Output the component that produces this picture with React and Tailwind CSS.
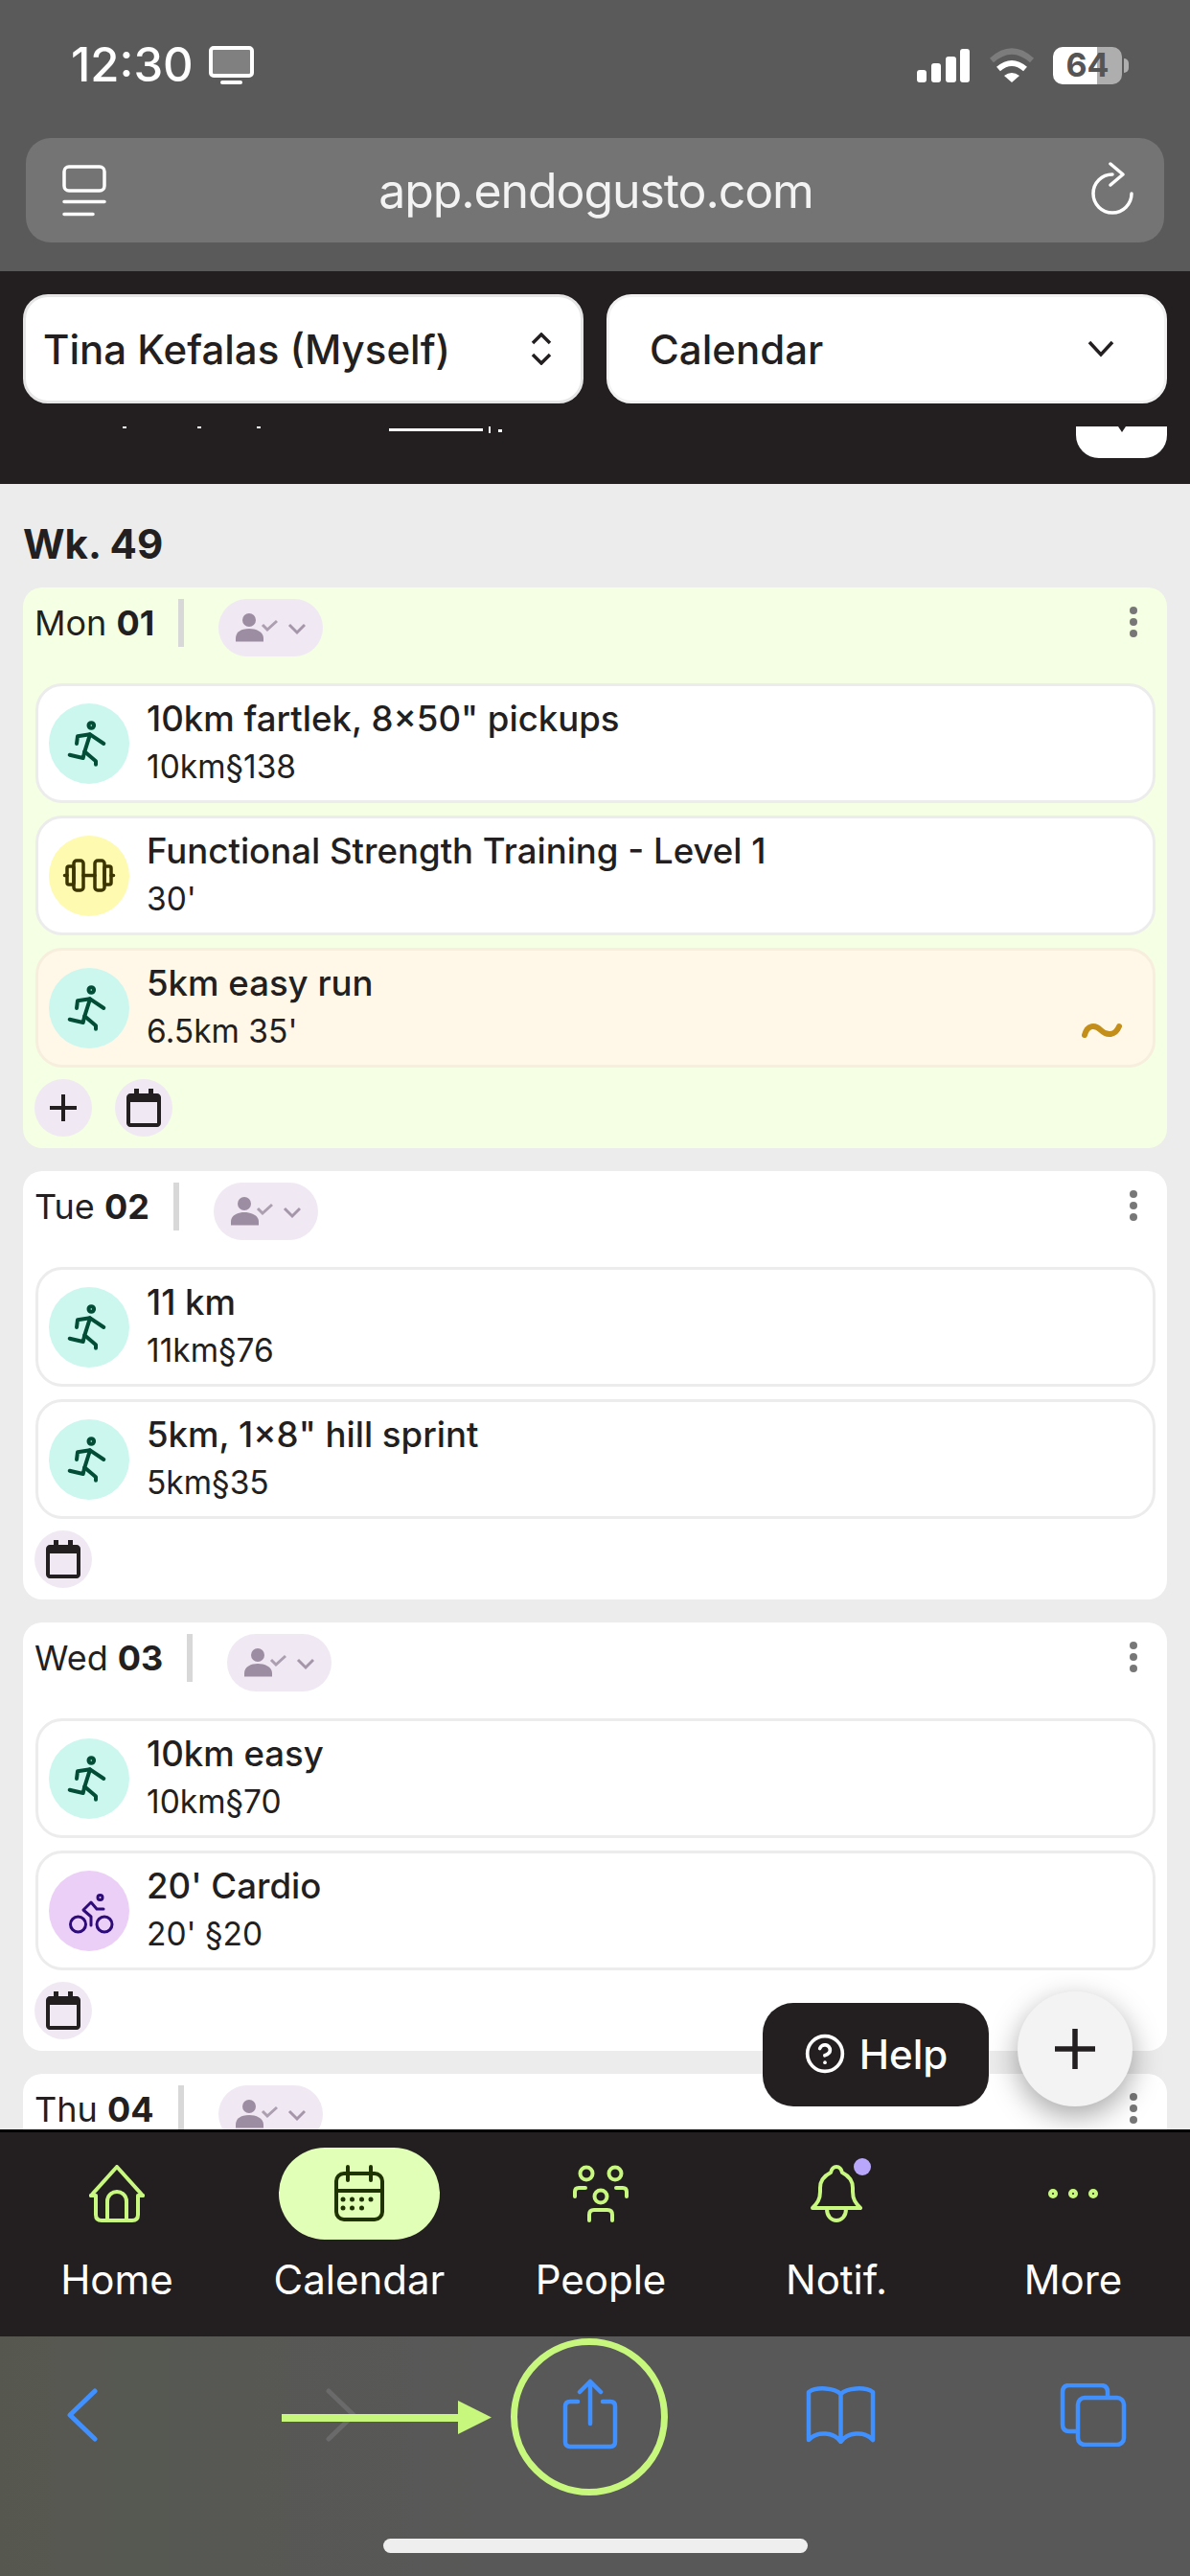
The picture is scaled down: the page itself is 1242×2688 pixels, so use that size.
import { CircleHelp } from "lucide-react";

const RUN = "run";
const LIFT = "lift";
const BIKE = "bike";

const days = [
  {
    name: "Mon",
    num: "01",
    today: true,
    canAdd: true,
    items: [
      { type: RUN, title: '10km fartlek, 8×50" pickups', sub: "10km§138" },
      { type: LIFT, title: "Functional Strength Training - Level 1", sub: "30'" },
      { type: RUN, title: "5km easy run", sub: "6.5km 35'", partial: true },
    ],
  },
  {
    name: "Tue",
    num: "02",
    items: [
      { type: RUN, title: "11 km", sub: "11km§76" },
      { type: RUN, title: '5km, 1×8" hill sprint', sub: "5km§35" },
    ],
  },
  {
    name: "Wed",
    num: "03",
    items: [
      { type: RUN, title: "10km easy", sub: "10km§70" },
      { type: BIKE, title: "20' Cardio", sub: "20' §20" },
    ],
  },
  { name: "Thu", num: "04", items: [] },
];

function SportIcon({ type }) {
  if (type === LIFT) {
    return (
      <div className="flex h-[84px] w-[84px] shrink-0 items-center justify-center rounded-full bg-[#fefaaf]">
        <svg viewBox="0 0 84 84" className="h-[84px] w-[84px]" fill="none" stroke="#3d3500" strokeWidth="3.5" strokeLinecap="round" strokeLinejoin="round">
          <rect x="19" y="32" width="7" height="19" rx="2" />
          <rect x="26" y="26" width="10" height="31" rx="3" />
          <rect x="48" y="26" width="10" height="31" rx="3" />
          <rect x="58" y="32" width="7" height="19" rx="2" />
          <path d="M36 41.5H48M16.5 41.5H19M65 41.5H67.5" />
        </svg>
      </div>
    );
  }
  if (type === BIKE) {
    return (
      <div className="flex h-[84px] w-[84px] shrink-0 items-center justify-center rounded-full bg-[#eccff7]">
        <svg viewBox="0 0 84 84" className="h-[84px] w-[84px]" fill="none" stroke="#2d0c7a" strokeWidth="3" strokeLinecap="round" strokeLinejoin="round">
          <circle cx="30.5" cy="56" r="8" />
          <circle cx="58" cy="56" r="8" />
          <circle cx="53.5" cy="28" r="2.5" />
          <path d="M44 57V48L36 41L44 33L50 40H57" />
        </svg>
      </div>
    );
  }
  return (
    <div className="flex h-[84px] w-[84px] shrink-0 items-center justify-center rounded-full bg-[#ccf7ee]">
      <svg viewBox="0 0 84 84" className="h-[84px] w-[84px]" fill="none" stroke="#024d35" strokeWidth="4" strokeLinecap="round" strokeLinejoin="round">
        <circle cx="44.3" cy="23" r="2.8" />
        <path d="M29 42L30 34.3L43 32.3L57.3 42" />
        <path d="M43 32.3L37.3 50.3L49 60.3V63.7" />
        <path d="M37.3 50.3L35.7 57L21.7 53.7" />
      </svg>
    </div>
  );
}

function Activity({ item }) {
  const tone = item.partial ? "bg-[#fff8e9] border-[#f7eedd]" : "bg-white border-[#ececec]";
  return (
    <div className={`relative flex h-[125px] items-center gap-[18px] rounded-[28px] border-[3px] pl-[11px] ${tone}`}>
      <SportIcon type={item.type} />
      <div className="flex flex-col pt-[2px] text-[#231f20]">
        <span className="text-[36.6px] font-[450] leading-[46px]">{item.title}</span>
        <span className="text-[33.5px] leading-[54px]">{item.sub}</span>
      </div>
      {item.partial && (
        <svg viewBox="0 0 42 16" className="absolute bottom-[28px] right-[32px] h-[16px] w-[42px]" fill="none" stroke="#c48e1a" strokeWidth="6" strokeLinecap="round">
          <path d="M3 13C6 2 14 2 20 8C26 14 35 14 39 4" />
        </svg>
      )}
    </div>
  );
}

function RoundButton({ children }) {
  return <div className="flex h-[60px] w-[60px] items-center justify-center rounded-full bg-[#f0e9f3]">{children}</div>;
}

function AssignPill() {
  return (
    <div className="flex h-[60px] w-[109px] shrink-0 items-center rounded-full bg-[#f0e9f3] pl-[18px]">
      <svg viewBox="0 0 73 30" className="h-[30px] w-[73px]" fill="none">
        <circle cx="14" cy="7" r="7" fill="#9d8da2" />
        <path d="M0 29.5V26C0 19 7 16 14 16C21 16 29 19 29 26V29.5Z" fill="#9d8da2" />
        <path d="M28 12L33 17L43 8" stroke="#ab9fb0" strokeWidth="3" />
        <path d="M56 12L64 20L72 12" stroke="#a596a9" strokeWidth="3" />
      </svg>
    </div>
  );
}

function DayCard({ day }) {
  return (
    <section className={`shrink-0 rounded-[20px] pb-[12px] pl-[13px] pr-[12px] pt-[12px] ${day.today ? "bg-[#f4ffe4]" : "bg-white"}`}>
      <header className="mb-[28px] flex h-[60px] items-start">
        <span className="-ml-px mr-[36px] border-r-[6px] border-[#d8d8d8] pr-[25px] text-[36px] leading-[50px] text-[#231f20]">
          {day.name} <b className="font-bold">{day.num}</b>
        </span>
        <AssignPill />
        <div className="ml-auto mr-[19px] mt-[8px] flex flex-col gap-[4px]">
          <span className="h-[8px] w-[8px] rounded-full bg-[#777777]" />
          <span className="h-[8px] w-[8px] rounded-full bg-[#777777]" />
          <span className="h-[8px] w-[8px] rounded-full bg-[#777777]" />
        </div>
      </header>
      <div className="flex flex-col gap-[13px]">
        {day.items.map((item) => (
          <Activity key={item.title} item={item} />
        ))}
      </div>
      <div className="-ml-px mt-[12px] flex gap-[24px]">
        {day.canAdd && (
          <RoundButton>
            <svg viewBox="0 0 28 28" className="h-[28px] w-[28px]" stroke="#231f20" strokeWidth="4">
              <path d="M14 0V28M0 14H28" />
            </svg>
          </RoundButton>
        )}
        <RoundButton>
          <svg viewBox="0 0 36 40" className="h-[40px] w-[36px]" fill="none">
            <path d="M8 0H13V5H23V0H28V5H32C34 5 36 7 36 9V36C36 38 34 40 32 40H4C2 40 0 38 0 36V9C0 7 2 5 4 5H8Z" fill="#231f20" />
            <rect x="4" y="14" width="28" height="22" fill="#f0e9f3" />
          </svg>
        </RoundButton>
      </div>
    </section>
  );
}

function NavItem({ label, active, badge, children }) {
  return (
    <div className="flex flex-col items-center">
      <div className={`relative flex h-[96px] w-[168px] items-center justify-center rounded-[48px] ${active ? "bg-[#e2ffb8]" : ""}`}>
        <div className="relative h-[60px] w-[60px]">
          {children}
          {badge && <span className="absolute left-[48px] top-[-7px] h-[18px] w-[18px] rounded-full bg-[#b9a7fb]" />}
        </div>
      </div>
      <span className="mt-[18px] text-[42px] leading-[48px] text-white">{label}</span>
    </div>
  );
}

const navStroke = {
  fill: "none",
  stroke: "#c8f87f",
  strokeWidth: 4,
  strokeLinecap: "round",
  strokeLinejoin: "round",
};

export default function App() {
  return (
    <div className="flex h-[2688px] w-[1242px] flex-col overflow-hidden bg-[#ececec] font-['Inter',sans-serif]">
      {/* browser top */}
      <div className="h-[283px] shrink-0 bg-[#5a5a5a]">
        <div className="flex h-[144px] items-start justify-between pl-[74px] pr-[64px] pt-[38px]">
          <div className="flex h-[60px] items-center gap-[16px]">
            <span className="text-[49px] font-medium leading-[60px] text-white">12:30</span>
            <div className="flex flex-col items-center gap-[3px]">
              <div className="h-[33px] w-[47px] rounded-[5px] border-[4px] border-white bg-[#808080]" />
              <div className="h-[4px] w-[23px] rounded-full bg-white" />
            </div>
          </div>
          <div className="flex h-[60px] items-center">
            <svg viewBox="0 0 55 35" className="h-[35px] w-[55px]" fill="white">
              <rect x="0" y="22" width="10" height="13" rx="3" />
              <rect x="15" y="15" width="10" height="20" rx="3" />
              <rect x="30" y="8" width="11" height="27" rx="3" />
              <rect x="45" y="0" width="10" height="35" rx="3" />
            </svg>
            <svg viewBox="0 0 48 36" className="ml-[20px] h-[36px] w-[48px]" fill="none">
              <path d="M3 13Q24 -6 45 13" stroke="#7c7c7c" strokeWidth="6" />
              <path d="M10 22Q24 10 38 22" stroke="white" strokeWidth="6" />
              <path d="M16 29Q24 23 32 29L24 36Z" fill="white" />
            </svg>
            <div className="ml-[19px] flex h-[39px] w-[72px] items-center justify-center rounded-[10px] bg-[linear-gradient(to_right,#ffffff_64%,#aeaeae_64%)] text-[34px] font-bold leading-none text-[#555555]">
              64
            </div>
            <div className="ml-[2px] h-[15px] w-[5px] rounded-r-full bg-[#aeaeae]" />
          </div>
        </div>
        <div className="relative mx-[27px] flex h-[109px] items-center justify-center rounded-[26px] bg-[#747474]">
          <svg viewBox="0 0 46 54" className="absolute left-[38px] top-[28px] h-[54px] w-[46px]" fill="none" stroke="white" strokeWidth="3.5" strokeLinecap="round">
            <rect x="2" y="2" width="42" height="25" rx="5" />
            <path d="M2 38.5H44M2 51.5H32" />
          </svg>
          <span className="ml-[2px] text-[50px] leading-none tracking-[-1.1px] text-[#f3f3f3]">app.endogusto.com</span>
          <svg viewBox="0 0 44 55" className="absolute right-[32px] top-[25px] h-[55px] w-[44px]" fill="none" stroke="white" strokeWidth="3.5" strokeLinecap="round" strokeLinejoin="round">
            <path d="M22 13A20 20 0 1 0 42 33" />
            <path d="M20 2L33 13L20 24" />
          </svg>
        </div>
      </div>

      {/* app header */}
      <div className="h-[222px] shrink-0 bg-[#231f20] pt-[24px]">
        <div className="flex gap-[24px] px-[24px]">
          <div className="flex h-[114px] w-[585px] items-center justify-between rounded-[26px] border-[3px] border-[#e6e6e6] bg-white pl-[18px] pr-[30px]">
            <span className="text-[42px] font-medium text-[#231f20]">Tina Kefalas (Myself)</span>
            <svg viewBox="0 0 22 34" className="h-[34px] w-[22px]" fill="none" stroke="#231f20" strokeWidth="3.5">
              <path d="M2 11L11 2L20 11M2 23L11 32L20 23" />
            </svg>
          </div>
          <div className="flex h-[114px] flex-1 items-center justify-between rounded-[26px] border-[3px] border-[#f2f2f2] bg-white pl-[42px] pr-[52px]">
            <span className="text-[42px] font-medium text-[#231f20]">Calendar</span>
            <svg viewBox="0 0 28 18" className="h-[18px] w-[28px]" fill="none" stroke="#231f20" strokeWidth="3.5">
              <path d="M2 2L14 15L26 2" />
            </svg>
          </div>
        </div>
        {/* row scrolled away under the selects */}
        <div className="mt-[24px] flex items-start pr-[24px]">
          <span className="ml-[128px] h-[2px] w-[4px] bg-white" />
          <span className="ml-[74px] h-[2px] w-[4px] bg-white" />
          <span className="ml-[58px] h-[2px] w-[4px] bg-white" />
          <span className="ml-[134px] mt-[2px] h-[3px] w-[98px] bg-white" />
          <span className="ml-[6px] h-[7px] w-[2px] bg-white" />
          <span className="ml-[8px] mt-[3px] h-[3px] w-[4px] bg-white" />
          <div className="ml-auto flex h-[33px] w-[95px] justify-center rounded-b-[24px] bg-white">
            <svg viewBox="0 0 10 6" className="h-[6px] w-[10px]" fill="#231f20">
              <path d="M1 0H9L5 6Z" />
            </svg>
          </div>
        </div>
      </div>

      {/* calendar */}
      <main className="relative min-h-0 flex-1 overflow-hidden px-[24px]">
        <h2 className="mb-[15px] mt-[33px] text-[42px] font-bold leading-[60px] text-[#231f20]">Wk. 49</h2>
        <div className="flex flex-col gap-[24px]">
          {days.map((day) => (
            <DayCard key={day.num} day={day} />
          ))}
        </div>
        <div className="absolute left-[796px] top-[1585px] flex h-[108px] w-[236px] items-center justify-center gap-[14px] rounded-[32px] bg-[#231f20] pb-[2px] text-[42px] font-medium text-white">
          <CircleHelp size={44} strokeWidth={2} />
          Help
        </div>
        <div className="absolute left-[1062px] top-[1573px] flex h-[120px] w-[120px] items-center justify-center rounded-full bg-[#f3f3f3] shadow-[0_10px_30px_rgba(0,0,0,0.35)]">
          <svg viewBox="0 0 42 42" className="h-[42px] w-[42px]" stroke="#231f20" strokeWidth="5.5">
            <path d="M21 0V42M0 21H42" />
          </svg>
        </div>
      </main>

      {/* bottom nav */}
      <nav className="grid h-[216px] shrink-0 grid-cols-[244px_262px_242px_250px_244px] border-t-[3px] border-black bg-[#231f20] pt-[16px]">
        <NavItem label="Home">
          <svg viewBox="0 0 60 60" className="h-[60px] w-[60px]" {...navStroke}>
            <path d="M3 32L30 2L57 32" />
            <path d="M3 32H8V52Q8 58 14 58H46Q52 58 52 52V32H57" />
            <path d="M20 58V38A10 10 0 0 1 40 38V58" />
          </svg>
        </NavItem>
        <NavItem label="Calendar" active>
          <svg viewBox="0 0 60 60" className="h-[60px] w-[60px]" fill="none" stroke="#1f3300" strokeWidth="4" strokeLinecap="round">
            <rect x="6" y="9" width="48" height="48" rx="8" />
            <path d="M18 2V16M42 2V16M6 27H54" />
            <g fill="#1f3300" stroke="none">
              <circle cx="13" cy="36" r="2.5" />
              <circle cx="22.5" cy="36" r="2.5" />
              <circle cx="32.5" cy="36" r="2.5" />
              <circle cx="42" cy="36" r="2.5" />
              <circle cx="13" cy="45" r="2.5" />
              <circle cx="22.5" cy="45" r="2.5" />
              <circle cx="32.5" cy="45" r="2.5" />
            </g>
          </svg>
        </NavItem>
        <NavItem label="People">
          <svg viewBox="0 0 60 60" className="h-[60px] w-[60px]" {...navStroke}>
            <circle cx="15" cy="9" r="6.5" />
            <circle cx="45" cy="9" r="6.5" />
            <circle cx="30" cy="33" r="6.5" />
            <path d="M3 33V28Q3 24 7 24H14M57 33V28Q57 24 53 24H46" />
            <path d="M18 58V52Q18 47 23 47H37Q42 47 42 52V58" />
          </svg>
        </NavItem>
        <NavItem label="Notif." badge>
          <svg viewBox="0 0 60 60" className="h-[60px] w-[60px]" {...navStroke}>
            <path d="M5 45C10 40 13 36 13 28V24C13 15 18 11 24 8C25 4 27 2 30 2C33 2 35 4 36 8C42 11 47 15 47 24V28C47 36 50 40 55 45Z" />
            <path d="M20 46C20 62 40 62 40 46" />
          </svg>
        </NavItem>
        <NavItem label="More">
          <svg viewBox="0 0 60 60" className="h-[60px] w-[60px]" {...navStroke}>
            <circle cx="9" cy="30" r="3" />
            <circle cx="30" cy="30" r="3" />
            <circle cx="51" cy="30" r="3" />
          </svg>
        </NavItem>
      </nav>

      {/* browser bottom */}
      <div className="relative h-[250px] shrink-0 bg-linear-to-r from-[#565850] to-[#585858] to-40%">
        <div className="grid h-[164px] grid-cols-[172px_368px_152px_370px_158px] items-center justify-items-center">
          <svg viewBox="0 0 32 56" className="h-[56px] w-[32px]" fill="none" stroke="#4090ff" strokeWidth="5" strokeLinecap="round" strokeLinejoin="round">
            <path d="M29 3L3 28L29 53" />
          </svg>
          <svg viewBox="0 0 32 56" className="h-[56px] w-[32px]" fill="none" stroke="#6a6a6a" strokeWidth="5" strokeLinecap="round" strokeLinejoin="round">
            <path d="M3 3L29 28L3 53" />
          </svg>
          <svg viewBox="0 0 70 76" className="h-[76px] w-[70px]" fill="none" stroke="#4090ff" strokeWidth="4.5" strokeLinecap="round" strokeLinejoin="round">
            <path d="M22 24H14Q9 24 9 29V66Q9 71 14 71H56Q61 71 61 66V29Q61 24 56 24H48" />
            <path d="M35 47V3M24 14L35 3L46 14" />
          </svg>
          <svg viewBox="0 0 73 60" className="h-[60px] w-[73px]" fill="none" stroke="#4090ff" strokeWidth="4.5" strokeLinejoin="round">
            <path d="M36.5 8C30 2 12 0 3 6V56C12 46 30 48 36.5 58C43 48 61 46 70 56V6C61 0 43 2 36.5 8ZM36.5 8V58" />
          </svg>
          <svg viewBox="0 0 70 66" className="h-[66px] w-[70px]" fill="none" stroke="#4090ff" strokeWidth="4.5">
            <rect x="19" y="15" width="48" height="49" rx="7" />
            <path d="M19 50H10Q3 50 3 43V9Q3 2 10 2H43Q50 2 50 9V15" />
          </svg>
        </div>
        <div className="mx-auto mt-[47px] h-[15px] w-[443px] rounded-full bg-[#eeeeee]" />
        {/* annotation drawn over the toolbar */}
        <div className="absolute left-[533px] top-[2px] h-[164px] w-[164px] rounded-full border-[7px] border-[#c8f77e]" />
        <svg viewBox="0 0 219 35" className="absolute left-[294px] top-[67px] h-[35px] w-[219px]" fill="#c8f77e">
          <path d="M0 14H184V0L219 17.5L184 35V22H0Z" />
        </svg>
      </div>
    </div>
  );
}
